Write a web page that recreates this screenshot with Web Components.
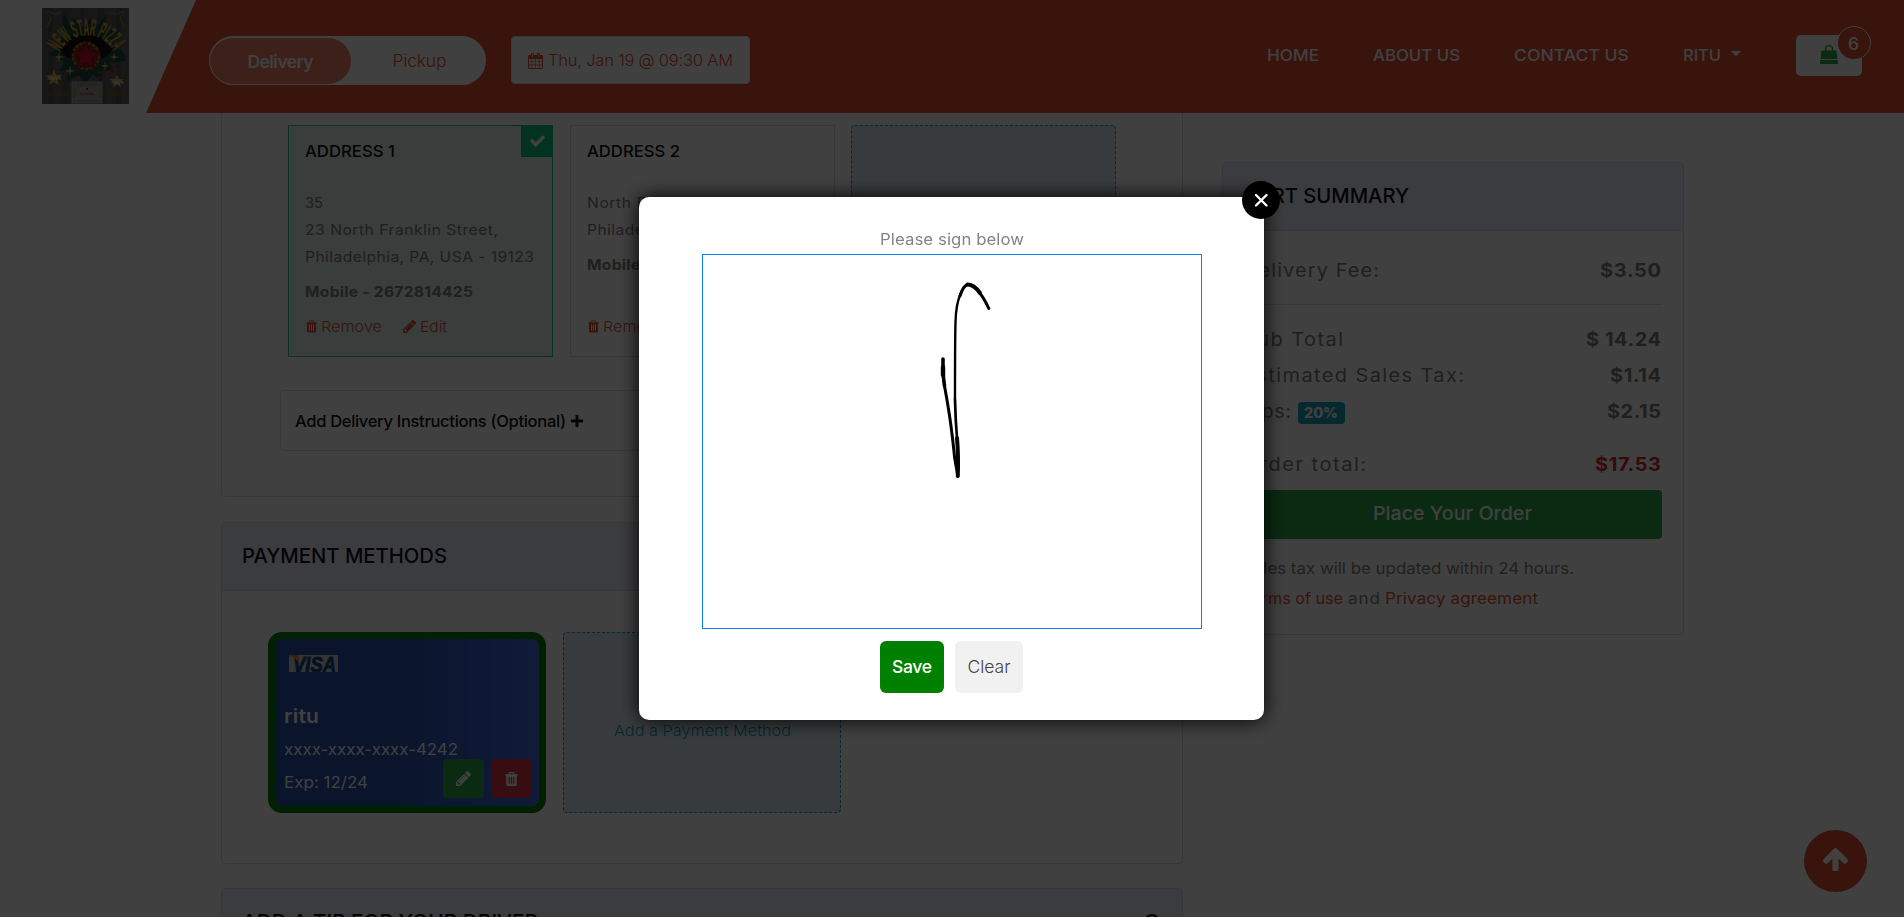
<!DOCTYPE html>
<html lang="en">
<head>
<meta charset="utf-8">
<title>New Star Pizza - Checkout</title>
<style>
html,body{margin:0;height:917px;overflow:hidden;background:#fff}
body{font-family:Inter,"Open Sans",sans-serif;color:#808080;font-size:16px}
</style>
</head>
<body>
<checkout-page></checkout-page>
<script>
const define = (name, html, after) => customElements.define(name, class extends HTMLElement {
  connectedCallback() {
    if (this.shadowRoot) return;
    const t = document.createElement('template');
    t.innerHTML = typeof html === 'function' ? html(this) : html;
    this.attachShadow({mode: 'open'}).append(t.content.cloneNode(true));
    if (after) after(this);
  }
});

const ICONS = {
  trash: ['0 128 1408 1536', '<path d="M512 1376v-704q0-14-9-23t-23-9h-64q-14 0-23 9t-9 23v704q0 14 9 23t23 9h64q14 0 23-9t9-23zm256 0v-704q0-14-9-23t-23-9h-64q-14 0-23 9t-9 23v704q0 14 9 23t23 9h64q14 0 23-9t9-23zm256 0v-704q0-14-9-23t-23-9h-64q-14 0-23 9t-9 23v704q0 14 9 23t23 9h64q14 0 23-9t9-23zm-544-992h448l-48-117q-7-9-17-11h-317q-10 2-17 11zm928 32v64q0 14-9 23t-23 9h-96v948q0 83-47 143.500t-113 60.500h-832q-66 0-113-58.500t-47-141.500v-952h-96q-14 0-23-9t-9-23v-64q0-14 9-23t23-9h309l70-167q15-37 54-63t79-26h320q40 0 79 26t54 63l70 167h309q14 0 23 9t9 23z"/>'],
  pencil: ['0 149 1515 1515', '<path d="M363 1536l91-91-235-235-91 91v107h128v128h107zm523-928q0-22-22-22-10 0-17 7l-542 542q-7 7-7 17 0 22 22 22 10 0 17-7l542-542q7-7 7-17zm-54-192l416 416-832 832h-416v-416zm683 96q0 53-37 90l-166 166-416-416 166-165q36-38 90-38 53 0 91 38l235 234q37 39 37 91z"/>'],
  check: ['120 300 1552 1222', '<path d="M1671 566q0 40-28 68l-724 724-136 136q-28 28-68 28t-68-28l-136-136-362-362q-28-28-28-68t28-68l136-136q28-28 68-28t68 28l294 295 656-657q28-28 68-28t68 28l136 136q28 28 28 68z"/>'],
  up: ['117 128 1558 1500', '<path d="M1675 971q0 51-37 90l-75 75q-38 38-91 38-54 0-90-38l-294-293v704q0 52-37.500 84.500t-90.500 32.500h-128q-53 0-90.500-32.500t-37.500-84.500v-704l-294 293q-36 38-90 38t-90-38l-75-75q-38-38-38-90 0-53 38-91l651-651q35-37 90-37 54 0 91 37l651 651q37 39 37 91z"/>'],
  plus: ['0 0 12 12', '<path d="M4.500 0h3v4.500H12v3H7.500V12h-3V7.500H0v-3h4.500z"/>'],
  calendar: ['0 0 15 16', '<path fill-rule="evenodd" d="M1 2h2V1.200a1.300 1.300 0 0 1 2.800 0V2h3.400v-.8a1.300 1.300 0 0 1 2.800 0V2h2q1 0 1 1v12q0 1-1 1H1q-1 0-1-1V3q0-1 1-1zM1 6v2.400h2.600V6zM4.300 6v2.400h2.900V6zM7.900 6v2.400h2.900V6zM11.500 6v2.400H14V6zM1 9.100v2.500h2.600V9.100zM4.300 9.100v2.500h2.900V9.100zM7.900 9.100v2.500h2.900V9.100zM11.500 9.100v2.500H14V9.100zM1 12.300V15h2.600v-2.700zM4.300 12.300V15h2.900v-2.700zM7.900 12.300V15h2.900v-2.700zM11.500 12.300V15H14v-2.700zM4 1.200v2.600h.8V1.200zM10.300 1.200v2.600h.8V1.200z"/>'],
  bag: ['0 0 18 19', '<path d="M1.500 5.500h15L17.500 14H.5zM.4 15h17.200l.4 4H0z"/><path d="M5.500 8V4a3.500 3.500 0 0 1 7 0v4" fill="none" stroke="currentColor" stroke-width="1.300"/>'],
  help: ['0 0 16 16', '<circle cx="8" cy="8" r="7" fill="none" stroke="currentColor" stroke-width="2"/><path d="M5.500 6.500q0-2.500 2.500-2.500t2.500 2.200Q10.500 8 8 9v1" fill="none" stroke="currentColor" stroke-width="1.800"/><circle cx="8" cy="12" r="1"/>']
};
define('ui-icon', el => `<style>:host{display:inline-block;flex:none;line-height:0}svg{display:block;fill:currentColor;width:100%;height:100%}</style>
<svg viewBox="${ICONS[el.getAttribute('name')][0]}">${ICONS[el.getAttribute('name')][1]}</svg>`);

define('shop-logo', `<style>:host{display:block;width:87px;height:96px}svg{display:block}text{font-family:"Liberation Serif",serif;font-weight:bold}.arc{font-family:"Liberation Sans",sans-serif}</style>
<svg width="87" height="96" viewBox="0 0 87 96">
<defs><path id="arc" d="M18 44A30 30 0 0 1 72 44"/></defs>
<rect width="87" height="96" fill="#5c5c60"/>
<g fill="#505054"><path d="M6 0h5v96H6zM20 0h7v96h-7zM38 0h4v96h-4zM55 0h8v96h-8zM74 0h5v96h-5z"/></g>
<path d="M22 5l8 17 1-13 9 10 9-9 5 9 11-13-2 16 14 0-7 11 6 8 6 4 2 8-17 2 6 9-11-1-3 10-8-7-8 10-6-9-12 6 2-11-10 1 6-9-17-8 12-6z" fill="#15483c"/>
<ellipse cx="44" cy="40" rx="26" ry="13" fill="#101014"/>
<circle cx="44" cy="48" r="14.500" fill="#703018"/><circle cx="44" cy="48" r="13" fill="none" stroke="#b06820" stroke-width="2.500" stroke-dasharray="3 1.500"/>
<path d="M44 34l3.700 9.300 11 .7-8.500 6.400 2.700 10.600-8.900-5.800-9.600 5.800 3.500-10.600-8.900-6.700 10.800-.6z" fill="#c01028" stroke="#780818"/>
<text class="arc" font-size="23" fill="#d09a30" stroke="#d09a30" stroke-width=".5"><textPath href="#arc" textLength="66" lengthAdjust="spacingAndGlyphs">NEW STAR PIZZA</textPath></text>
<g stroke="#a08840" fill="none"><path d="M3 5q4-3 7 0t9-1M5 6q5 2 3 7t-4 7M84 5q-4-3-7 0t-9-1M82 6q-5 2-3 7t4 7"/></g>
<g fill="#d8b048"><path d="M17 43l.8 5 4.700 1-4.700 1-.8 5-.8-5-4.700-1 4.700-1zM28 57l.8 5 4.700 1-4.700 1-.8 5-.8-5-4.700-1 4.700-1zM72 44l.7 4 3.800 1-3.800 1-.7 4-.7-4-3.800-1 3.800-1zM63 53l.7 4 3.800 1-3.800 1-.7 4-.7-4-3.800-1 3.800-1z"/>
<path d="M12 61l1.800 6 6.200.3-4.800 4 1.600 6-4.800-3.600L7 77l1.700-6-5-3.600 6.300-.4zM75 66l1.500 5 5.500.2-4.300 3.400 1.500 5-4.200-3-4.400 3 1.500-5-4.400-3.400 5.500-.2z"/></g>
<text x="5" y="72" font-size="5" fill="#eee" textLength="14" lengthAdjust="spacingAndGlyphs">ALWAYS</text><text x="70" y="76" font-size="4" fill="#eee" textLength="11" lengthAdjust="spacingAndGlyphs">FRESH</text>
<text x="55" y="66" font-size="5" fill="#d03058" transform="rotate(-9 55 66)" textLength="25" lengthAdjust="spacingAndGlyphs">Because we</text><text x="55" y="71" font-size="4.500" fill="#d03058" transform="rotate(-9 55 71)" textLength="22" lengthAdjust="spacingAndGlyphs">are better</text>
<text x="3" y="88" font-size="9" fill="#806020" textLength="26" lengthAdjust="spacingAndGlyphs">Strawberry Square</text><text x="61" y="88" font-size="9" fill="#806020" textLength="22" lengthAdjust="spacingAndGlyphs">Shopping Center</text>
<rect x="30" y="74" width="30" height="21" fill="#8c8c86" stroke="#aaa"/><path d="M30 79h30M30 91h30M34 74v21M57 74v21" stroke="#b0b0a8" stroke-width=".7"/><rect x="35" y="79.500" width="21" height="11" fill="#a0a09c"/>
<text x="38" y="87" font-size="3.500" fill="#b01020" textLength="14" lengthAdjust="spacingAndGlyphs">New Star Pizza</text><rect x="44" y="80" width="2" height="2" fill="#444"/>
</svg>`);

define('order-toggle', `<style>:host{display:flex;box-sizing:border-box;width:277px;height:49px;border-radius:25px;background:#fff;padding:1px;color:#e05030;font-size:17.500px}
span{display:flex;align-items:center;justify-content:center;flex:1;padding-left:3px;font-weight:300}
.on{flex:0 0 141px;box-sizing:border-box;border-radius:24px;background:#f28069;color:#fff;font-weight:600;padding:0;margin-top:1px}</style>
<span class="on"><fit-text w="66">Delivery</fit-text></span><span><fit-text w="54">Pickup</fit-text></span>`);

define('cart-button', `<style>:host{display:block;position:relative;width:66px;height:41px;border-radius:5px;background:#fff;color:#28a745}
ui-icon{width:18px;height:19px;margin:10px 0 0 24px}
b{position:absolute;left:41px;top:-9px;width:32px;height:32px;border:1px solid #fff;border-radius:50%;background:#e05030;color:#fff;font:500 17.500px/33px Inter,sans-serif;text-align:center;text-indent:-1px}</style>
<ui-icon name="bag"></ui-icon><b>6</b>`);

define('site-header', `<style>:host{display:flex;position:relative;height:113px;background:#fff}
.bar{flex:1;display:flex;clip-path:polygon(50px 0,100% 0,100% 100%,0 100%);background:#e05030}
shop-logo{margin:8px 17px 0 42px}
order-toggle{margin:36px 25px 0 63px}
.date{box-sizing:border-box;width:239px;height:48px;margin-top:36px;border:1px solid #e8e4e8;border-radius:4px;background:#fff;color:#e05030;display:flex;align-items:center;padding-left:16px;gap:5px;font-size:16.500px;font-weight:300}
.date ui-icon{width:15px;height:16px;margin-top:2px}
nav{margin-left:auto;display:flex;color:#fff;font-size:16.500px;font-weight:500;line-height:28px;margin-top:41px}
nav>*{margin-right:54px}.user{margin-right:10px}
i{margin:10px 55px 0 0;width:0;height:0;border:5px solid transparent;border-top-color:#fff;border-bottom:0}
cart-button{margin:35px 42px 0 0}</style>
<shop-logo></shop-logo><div class="bar"><order-toggle></order-toggle>
<div class="date"><ui-icon name="calendar"></ui-icon><fit-text w="185">Thu, Jan 19 @ 09:30 AM</fit-text></div>
<nav><fit-text w="52">HOME</fit-text><fit-text w="87">ABOUT US</fit-text><fit-text w="115">CONTACT US</fit-text><fit-text w="38" class="user">RITU</fit-text><i></i></nav>
<cart-button></cart-button></div>`);

define('box-panel', `<style>:host{display:block;box-sizing:border-box;border:1px solid #dcdcdc;border-radius:4px;background:#fff}
header{box-sizing:border-box;height:68px;border-bottom:1px solid #dcdcea;background:#ecedf9;border-radius:3px 3px 0 0;display:flex;align-items:center;justify-content:space-between;padding:0 22px 2px 20px;color:#101010;font-size:20px;font-weight:500}
:host([bare]) header{display:none}</style><header><slot name="title"></slot><slot name="aside"></slot></header><slot></slot>`);

define('address-card', `<style>:host{display:flex;position:relative;box-sizing:border-box;width:265px;height:232px;border:1px solid #dadada;padding:13px 0 16px 16px;flex-direction:column;font-size:14.500px;line-height:27px;color:#7c7c7c}
:host([selected]){border-color:#14c88c;background:#e4f2ed}
.tick{display:none;position:absolute;right:-1px;top:-1px;width:32px;height:32px;background:#10c684;color:#fff;align-items:center;justify-content:center}
:host([selected]) .tick{display:flex}.tick ui-icon{width:15px;height:12px}
h4{margin:0 0 26px;font-size:16.500px;line-height:24px;font-weight:500;color:#101010}
.mob{margin-top:8px;font-weight:700}.links{margin-top:auto;display:flex;color:#e05030;font-size:15px;font-weight:300}
::slotted(div){height:27px;white-space:nowrap}
.links ui-icon{margin:7px 4px 0 1px;width:11px;height:13px}.links .p{margin-left:21px;width:13px;height:13px}</style>
<div class="tick"><ui-icon name="check"></ui-icon></div><h4><slot name="title"></slot></h4><slot></slot>
<div class="mob"><fit-text w="168">Mobile - 2672814425</fit-text></div>
<div class="links"><ui-icon name="trash"></ui-icon><fit-text w="61">Remove</fit-text><ui-icon class="p" name="pencil"></ui-icon><fit-text w="27">Edit</fit-text></div>`);

define('add-tile', `<style>:host{display:flex;box-sizing:border-box;align-items:center;justify-content:center;border:1px dashed #17a2b8;border-radius:4px;background:#dcecf2;color:#179ab8;font-size:15px;font-weight:300}</style><slot></slot>`);

define('visa-logo', `<style>:host{display:block;width:49px;height:17px}svg{display:block}</style>
<svg width="49" height="17" viewBox="0 0 49 17"><rect width="49" height="17" fill="#d0d0d0"/><text x="4" y="16.500" font-family="Liberation Sans,sans-serif" font-weight="bold" font-style="italic" font-size="22.500" textLength="43" lengthAdjust="spacingAndGlyphs" fill="#124880" stroke="#124880" stroke-width=".9">VISA</text><path d="M1 0h6.500q1.800 0 2 2.500l1.200 7Q7 3 1 .8z" fill="#e09018"/></svg>`);

define('pay-card', `<style>:host{display:block;position:relative;box-sizing:border-box;width:278px;height:181px;border:7px solid #008000;border-radius:14px;background:linear-gradient(90deg,#2850a8 40%,#4468e4);color:#fff;font-size:16px;line-height:32px;padding:16px 0 0 9px}
visa-logo{margin-left:5px}.n{font-size:19.500px;font-weight:600;line-height:30px;margin:29px 0 2px}.e{margin-top:1px}
.btns{position:absolute;right:8px;bottom:8px;display:flex;gap:8px}.btns span{display:flex;align-items:center;justify-content:center;width:41px;height:39px;border-radius:4px;background:#28a745}.btns .del{width:39px;background:#dc3545}
.btns ui-icon{width:13px;height:14px}
.btns span:first-child ui-icon{width:15px;height:15px}</style>
<visa-logo></visa-logo><div class="n"><fit-text w="35">ritu</fit-text></div><div><fit-text w="174">xxxx-xxxx-xxxx-4242</fit-text></div><div class="e"><fit-text w="84">Exp: 12/24</fit-text></div>
<div class="btns"><span><ui-icon name="pencil"></ui-icon></span><span class="del"><ui-icon name="trash"></ui-icon></span></div>`);

define('summary-row', `<style>:host{display:flex;justify-content:space-between;line-height:36px;font-size:18.500px;color:#7c7c7c}.v{font-weight:700;margin-right:1px}:host([total]) .v{color:#dc2535}.l{display:flex;align-items:center}</style><span class="l"><slot></slot></span><span class="v"><slot name="value"></slot></span>`);

define('cart-summary', `<style>:host{display:block}box-panel{height:473px}.in{padding:21px 21px 0 20px}
hr{border:0;height:1px;background:#dcdcdc;margin:16px 0}
.t{margin-top:17px}.badge{margin-left:7px;width:47px;height:22px;line-height:22px;margin-top:3px;border-radius:4px;background:#17a2b8;color:#fff;font-size:14.500px;font-weight:800;text-align:center}
.btn{margin:8px 0 15px;height:49px;padding-bottom:3px;box-sizing:border-box;border-radius:4px;background:#28a745;color:#fff;display:flex;align-items:center;justify-content:center;font-size:18.500px;font-weight:500}
p{margin:0;line-height:30px;font-size:15.800px;display:flex;gap:5px}a{color:#e05030}</style>
<box-panel><fit-text slot="title" w="166">CART SUMMARY</fit-text><div class="in">
<summary-row><fit-text w="136">Delivery Fee:</fit-text><fit-text slot="value" w="61">$3.50</fit-text></summary-row><hr>
<summary-row><fit-text w="100">Sub Total</fit-text><fit-text slot="value" w="75">$ 14.24</fit-text></summary-row>
<summary-row><fit-text w="221">Estimated Sales Tax:</fit-text><fit-text slot="value" w="51">$1.14</fit-text></summary-row>
<summary-row><fit-text w="48">Tips:</fit-text><span class="badge"><fit-text w="34">20%</fit-text></span><fit-text slot="value" w="54">$2.15</fit-text></summary-row>
<summary-row total class="t"><fit-text w="123">Order total:</fit-text><fit-text slot="value" w="66">$17.53</fit-text></summary-row>
<div class="btn"><fit-text w="159">Place Your Order</fit-text></div>
<p><fit-text w="331">Sales tax will be updated within 24 hours.</fit-text></p>
<p><a><fit-text w="100">Terms of use</fit-text></a><fit-text w="32">and</fit-text><a><fit-text w="153">Privacy agreement</fit-text></a></p>
</div></box-panel>`);

define('scroll-top', `<style>:host{position:fixed;right:37px;bottom:25px;width:63px;height:62px;border-radius:50%;background:#e05030;color:#fff;display:flex;align-items:center;justify-content:center}ui-icon{width:25px;height:24px;margin-top:-5px}</style><ui-icon name="up"></ui-icon>`);

define('sign-modal', `<style>:host{position:fixed;inset:0;background:rgba(0,0,0,.75)}
.box{position:absolute;left:639px;top:197px;width:625px;height:523px;box-sizing:border-box;border-radius:10px;background:#fff;box-shadow:0 0 20px #000;display:flex;flex-direction:column;align-items:center;padding-top:30px;font-size:15.500px;color:#848484}
.lab{line-height:25px;height:27px}
.pad{width:500px;height:375px;box-sizing:border-box;border:1px solid #0a80f0}
svg{display:block;fill:none;stroke:#000;stroke-linecap:round;stroke-linejoin:round}
.row{display:flex;gap:11px;margin-top:12px;font-size:17.500px}
.row span{box-sizing:border-box;height:52px;padding-bottom:2px;border-radius:6px;display:flex;align-items:center;justify-content:center;width:64px;background:#008000;color:#fff;font-weight:500}.row .c{width:68px;background:#f1f1f1;color:#444;font-weight:300}
.x{position:absolute;right:-16px;top:-16px;width:38px;height:38px;border-radius:50%;background:#000}</style>
<div class="box"><div class="lab"><fit-text w="144">Please sign below</fit-text></div>
<div class="pad"><svg width="498" height="373" viewBox="703 255 498 373">
<path stroke-width="3" d="M988.800 308.500Q984 298 979 292"/><path stroke-width="4" d="M980 293Q974 284.500 967.500 284.500"/><path stroke-width="3" d="M967.500 284.500Q963 286 960 296"/><path stroke-width="2.400" d="M960.500 294Q956 304 955.500 322T955 400"/><path stroke-width="2.700" d="M955 400Q955.500 420 957 438"/><path stroke-width="4" d="M957 438Q958.500 455 957.800 476"/>
<path stroke-width="3.600" d="M943 359V370Q943.300 378 944.500 386"/><path stroke-width="4.400" d="M943 367V375"/><path stroke-width="3" d="M944.500 386Q949 410 951.500 430T954.500 457L957.800 476"/></svg></div>
<div class="row"><span><fit-text w="40">Save</fit-text></span><span class="c"><fit-text w="43">Clear</fit-text></span></div>
<div class="x"><svg width="38" height="38" style="stroke:#fff;stroke-width:2.400"><path d="M14 14L24.500 24.500M24.500 14L14 24.500"/></svg></div></div>`);

define('checkout-page', `<style>:host{display:block;height:917px;overflow:hidden}
main{display:grid;grid-template-columns:961.500px 462px;column-gap:39px;padding-left:221px;align-items:start}
.left{display:flex;flex-direction:column}
.ship{height:384px;border-top:0;border-top-left-radius:0;border-top-right-radius:0;margin-bottom:25px}
.in{padding:12px 58px 0 58px}.cards{display:flex;justify-content:space-between;width:828px;margin-left:8px}
.cards add-tile{width:265px;height:232px}
.note{box-sizing:border-box;height:61px;margin-top:33px;border:1px solid #dcdcdc;border-radius:4px;display:flex;align-items:center;gap:5px;padding:1px 0 0 14px;color:#101010;font-size:16.500px;font-weight:500;width:844px}
.note ui-icon{width:12px;height:12px}
.pay{height:342px;margin-bottom:24px}.methods{display:flex;gap:17px;padding:41px 46px}.methods add-tile{width:278px;height:181px;padding-top:16px}
.tip{height:200px}cart-summary{margin-top:49px}</style>
<site-header></site-header>
<main><div class="left">
<box-panel bare class="ship"><div class="in"><div class="cards">
<address-card selected><fit-text slot="title" w="90">ADDRESS 1</fit-text><div><fit-text w="18">35</fit-text></div><div><fit-text w="193">23 North Franklin Street,</fit-text></div><div><fit-text w="229">Philadelphia, PA, USA - 19123</fit-text></div></address-card>
<address-card><fit-text slot="title" w="93">ADDRESS 2</fit-text><div><fit-text w="148">North Front Street,</fit-text></div><div><fit-text w="229">Philadelphia, PA, USA - 19123</fit-text></div></address-card>
<add-tile></add-tile></div>
<div class="note"><fit-text w="271">Add Delivery Instructions (Optional)</fit-text><ui-icon name="plus"></ui-icon></div></div></box-panel>
<box-panel class="pay"><fit-text slot="title" w="205">PAYMENT METHODS</fit-text><div class="methods"><pay-card></pay-card><add-tile><fit-text w="177">Add a Payment Method</fit-text></add-tile></div></box-panel>
<box-panel class="tip"><fit-text slot="title" w="296">ADD A TIP FOR YOUR DRIVER</fit-text><ui-icon slot="aside" name="help" style="width:16px;height:16px"></ui-icon></box-panel>
</div><cart-summary></cart-summary></main>
<scroll-top></scroll-top><sign-modal></sign-modal>`);

// Widens the glyphs a little, then spaces them, so that a run fills the width given in "w".
define('fit-text', `<style>:host{display:inline-block;white-space:pre}span{display:inline-block;transform-origin:0 50%}</style><span><slot></slot></span>`, el => {
  const w = +el.getAttribute('w'), span = el.shadowRoot.querySelector('span');
  const n = el.textContent.length, natural = span.getBoundingClientRect().width;
  const k = Math.max(1, Math.min(1.08, w / natural));
  span.style.letterSpacing = (w / k - natural) / (n - 1) + 'px';
  if (k > 1) span.style.transform = `scaleX(${k})`;
  el.style.width = w + 'px';
});
</script>
</body>
</html>
